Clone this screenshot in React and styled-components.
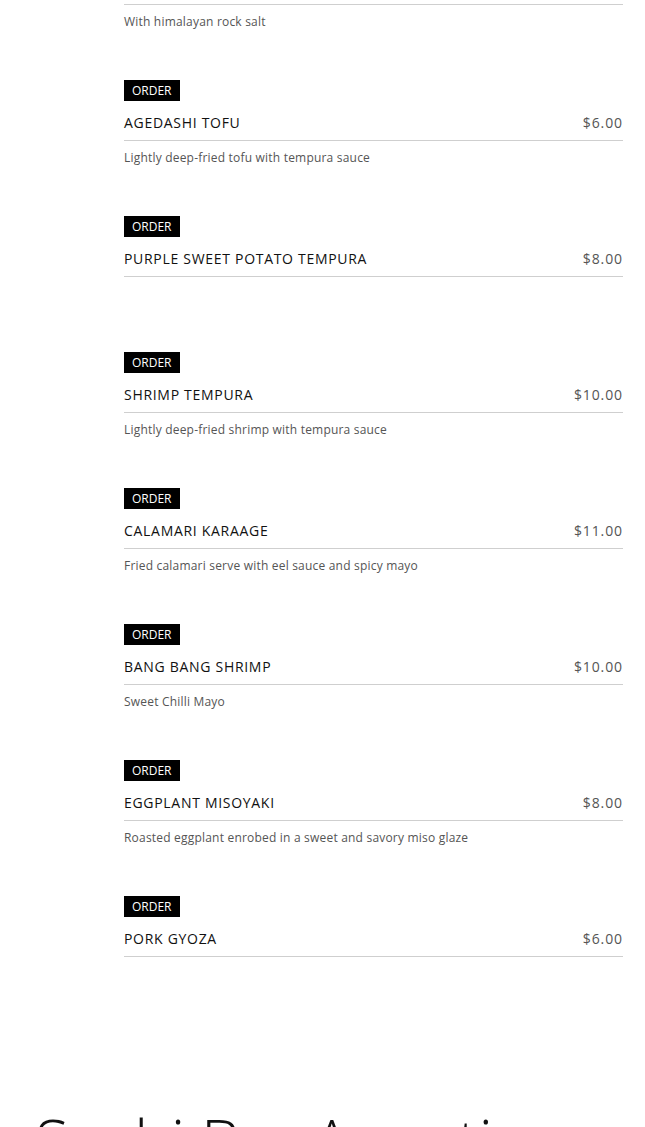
import React from 'react';
import styled, { createGlobalStyle } from 'styled-components';

const GlobalStyle = createGlobalStyle`
  html, body {
    margin: 0;
    padding: 0;
    background: #ffffff;
    overflow: hidden;
  }
  body {
    font-family: "Open Sans", "Liberation Sans", sans-serif;
  }
`;

const Page = styled.div`
  width: 645px;
  height: 1127px;
  overflow: hidden;
`;

// list is scrolled, first item only partly visible
const MenuList = styled.div`
  margin-top: -136px;
  padding: 0 22px 0 124px;
  display: flex;
  flex-direction: column;
`;

const Item = styled.div`
  padding-top: 80px;
  padding-bottom: 48px;
  & + & {
    padding-top: 0;
  }
`;

const OrderButton = styled.button`
  display: block;
  height: 21px;
  padding: 0 8px;
  border: none;
  background: #000;
  color: #fff;
  font-family: "Open Sans", "Liberation Sans", sans-serif;
  font-size: 12px;
  line-height: 21px;
  cursor: pointer;
`;

const ItemRow = styled.div`
  margin-top: 10px;
  display: flex;
  justify-content: space-between;
  align-items: center;
  height: 23px;
  padding-bottom: 6px;
  border-bottom: 1px solid #cfcfcf;
`;

const ItemName = styled.div`
  font-size: 14px;
  font-weight: 500;
  letter-spacing: 0.7px;
  color: #111;
`;

const ItemPrice = styled.div`
  font-size: 14px;
  letter-spacing: 0.9px;
  color: #555;
`;

const ItemDesc = styled.div`
  margin-top: 7px;
  min-height: 20px;
  font-size: 12px;
  line-height: 20px;
  letter-spacing: 0.2px;
  color: #555;
`;

const SectionTitle = styled.h2`
  margin: 74px 0 0 35px;
  font-family: "Open Sans", "Liberation Sans", sans-serif;
  font-weight: 300;
  font-size: 62px;
  line-height: 70px;
  color: #111;
  white-space: nowrap;
`;

const items = [
  { name: 'EDAMAME', price: '$5.00', desc: 'With himalayan rock salt' },
  { name: 'AGEDASHI TOFU', price: '$6.00', desc: 'Lightly deep-fried tofu with tempura sauce' },
  { name: 'PURPLE SWEET POTATO TEMPURA', price: '$8.00', desc: '' },
  { name: 'SHRIMP TEMPURA', price: '$10.00', desc: 'Lightly deep-fried shrimp with tempura sauce' },
  { name: 'CALAMARI KARAAGE', price: '$11.00', desc: 'Fried calamari serve with eel sauce and spicy mayo' },
  { name: 'BANG BANG SHRIMP', price: '$10.00', desc: 'Sweet Chilli Mayo' },
  { name: 'EGGPLANT MISOYAKI', price: '$8.00', desc: 'Roasted eggplant enrobed in a sweet and savory miso glaze' },
  { name: 'PORK GYOZA', price: '$6.00', desc: '' },
];

export default function App() {
  return (
    <Page>
      <GlobalStyle />
      <MenuList>
        {items.map((it) => (
          <Item key={it.name}>
            <OrderButton>ORDER</OrderButton>
            <ItemRow>
              <ItemName>{it.name}</ItemName>
              <ItemPrice>{it.price}</ItemPrice>
            </ItemRow>
            <ItemDesc>{it.desc}</ItemDesc>
          </Item>
        ))}
      </MenuList>
      <SectionTitle>Sushi Bar Appetizers</SectionTitle>
    </Page>
  );
}
